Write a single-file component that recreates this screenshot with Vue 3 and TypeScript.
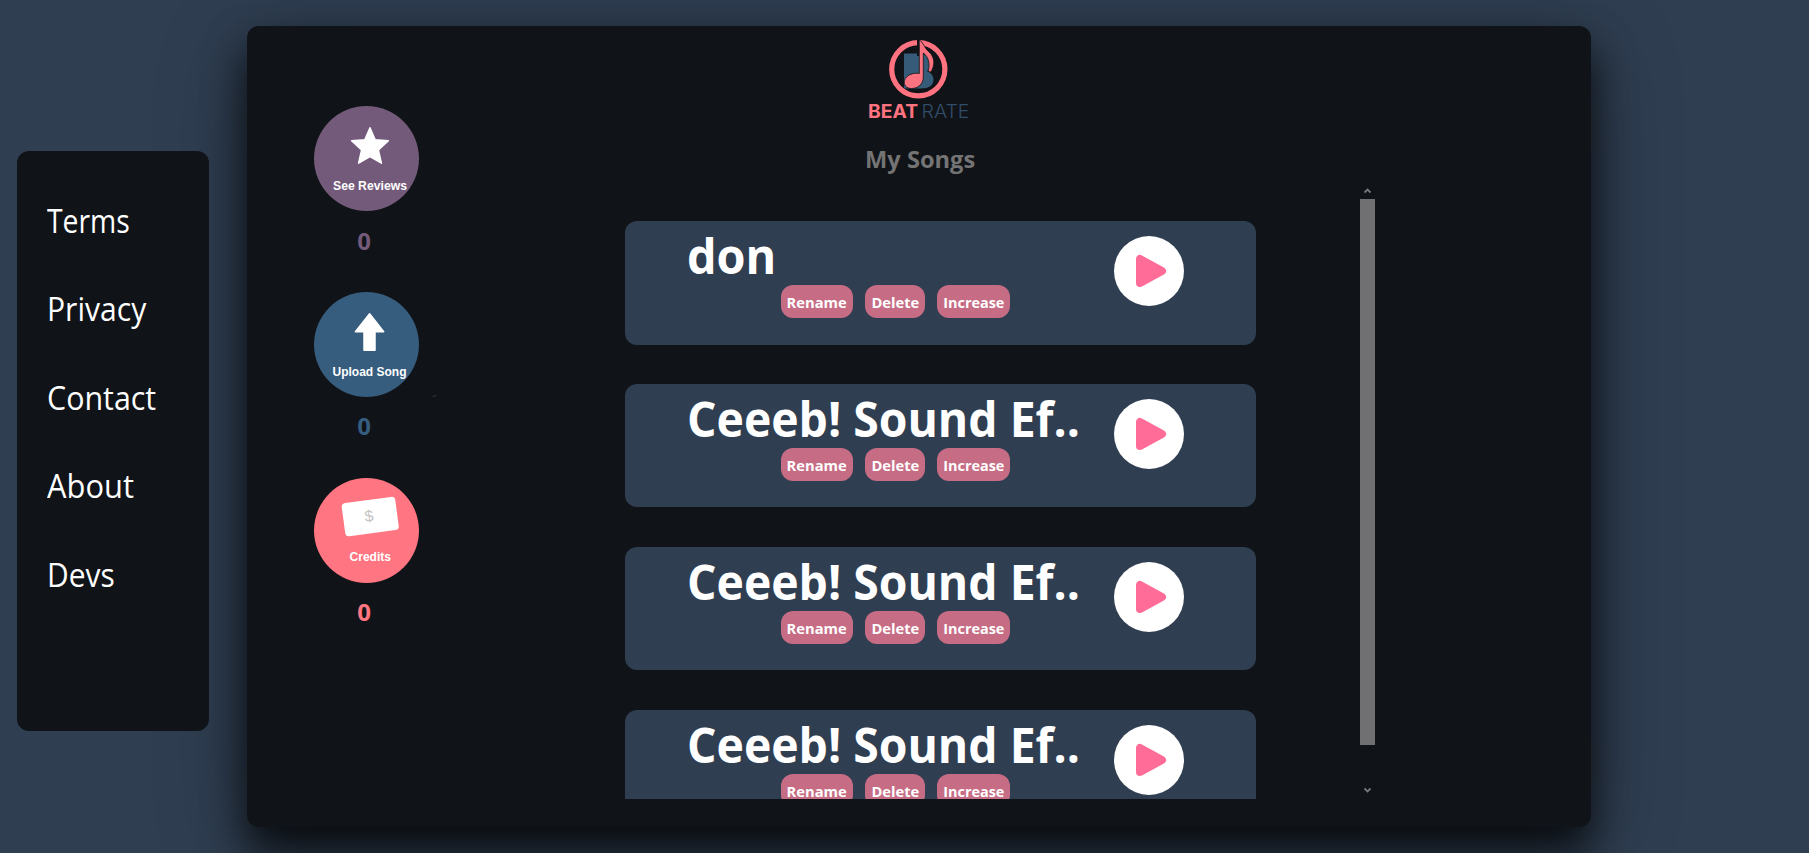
<script setup lang="ts">
interface Stat {
  kind: 'reviews' | 'upload' | 'credits'
  label: string
  count: number
  x: number
  y: number
  width: number
}

const links: string[] = ['Terms', 'Privacy', 'Contact', 'About', 'Devs']

const stats: Stat[] = [
  { kind: 'reviews', label: 'See Reviews', count: 0, x: 19, y: 84, width: 74 },
  { kind: 'upload', label: 'Upload Song', count: 0, x: 18.5, y: 84, width: 74 },
  { kind: 'credits', label: 'Credits', count: 0, x: 35.5, y: 83, width: 41.5 },
]

const songs: string[] = ['don', 'Ceeeb! Sound Ef..', 'Ceeeb! Sound Ef..', 'Ceeeb! Sound Ef..']
</script>

<template>
  <div class="page">
    <nav class="side">
      <a v-for="link in links" :key="link" :class="['link', link.toLowerCase()]"><span>{{ link }}</span></a>
    </nav>

    <main class="panel">
      <aside class="stats">
        <div v-for="s in stats" :key="s.kind" :class="['stat', s.kind]">
          <svg class="disc" width="105" height="105" viewBox="0 0 105 105">
            <circle class="fill" cx="52.5" cy="52.5" r="52.5" />
            <path v-if="s.kind === 'reviews'" class="glyph" d="M56 21.8 61.2 33.8 74.4 34.8 64.4 43.9 67.4 57.2 56 50.7 44.6 57.2 47.6 43.9 37.6 34.8 50.8 33.8Z" />
            <template v-if="s.kind === 'upload'">
              <path class="glyph" d="M55.6 21.8 69.7 39.7H61V58.2H50V39.7H41.4Z" />
              <path d="M118.500 104.300Q121 104.500 122.500 103.300" fill="none" stroke="#33383c" />
            </template>
            <g v-if="s.kind === 'credits'" transform="rotate(-7.6 56.2 38.3)">
              <rect x="29.2" y="21.8" width="54" height="33.500" rx="4" fill="#fff" />
              <text class="dollar" x="55" y="43.2" text-anchor="middle">$</text>
            </g>
            <text class="caption" :x="s.x" :y="s.y" :textLength="s.width" lengthAdjust="spacingAndGlyphs">{{ s.label }}</text>
          </svg>
          <div class="count">{{ s.count }}</div>
        </div>
      </aside>

      <section class="content">
        <svg class="logo" width="104" height="92" viewBox="0 0 104 92">
          <path fill="#355b78" d="M37 17.500H50C59 17.500 63.500 21.500 63.500 27.500C63.500 31 62 33.500 60 35C64 36.500 66.500 40 66.500 43.500C66.500 49.500 62 52.500 54 52.500H37Z" />
          <circle cx="51.300" cy="33.300" r="26.600" fill="none" stroke="#ff7380" stroke-width="5.200" />
          <path fill="#101317" d="M50 2H52.300V20H50Z" />
          <path fill="#ff7380" stroke="#101317" stroke-width=".8" d="M52.300 4C56.500 6 57 12 61.500 15.500C67.500 20.500 68.500 28 64 36L61 35.500C63.500 28.500 61.500 20.500 56.300 17V41C56.300 48 51 52.500 44.500 52.500C39 52.500 36.300 48.500 37.500 44.500C39 39.500 45.500 36.300 52.300 37.500Z" />
          <text class="brand bold" x="1" y="82" textLength="50" lengthAdjust="spacingAndGlyphs">BEAT</text>
          <text class="brand thin" x="54.500" y="82" textLength="48" lengthAdjust="spacingAndGlyphs">RATE</text>
        </svg>
        <h2 class="heading"><span>My Songs</span></h2>

        <div class="scroller">
          <div class="list">
            <article v-for="(song, i) in songs" :key="i" class="card">
              <div class="info">
                <h1 :class="['name', { short: song.length < 5 }]"><span>{{ song }}</span></h1>
                <div class="actions">
                  <button class="rename"><span>Rename</span></button>
                  <button class="delete"><span>Delete</span></button>
                  <button class="increase"><span>Increase</span></button>
                </div>
              </div>
              <svg class="play" width="70" height="70" viewBox="0 0 70 70">
                <circle cx="35" cy="35" r="35" fill="#fff" />
                <path d="M26 23V47L48 35Z" fill="#ff6c97" stroke="#ff6c97" stroke-width="8" stroke-linejoin="round" />
              </svg>
            </article>
          </div>
          <div class="bar">
            <svg width="15" height="15" viewBox="0 0 15 15"><path d="M4.500 8.500 7.500 5.500 10.500 8.500" /></svg>
            <div class="thumb"></div>
            <svg class="down" width="15" height="15" viewBox="0 0 15 15"><path d="M4.500 4.500 7.500 7.500 10.500 4.500" /></svg>
          </div>
        </div>
      </section>
    </main>
  </div>
</template>

<style>
body {
  background: #2f3e51;
  overflow: hidden;
}
</style>

<style scoped>
.page {
  display: flex;
  align-items: flex-start;
  width: 1809px;
  height: 853px;
  overflow: hidden;
  background: #2f3e51;
  font-family: "Open Sans", "Noto Sans", sans-serif;
}
.side {
  position: relative;
  z-index: 1;
  box-sizing: border-box;
  width: 192px;
  height: 580px;
  margin: 151px 38px 0 17px;
  padding: 25.500px 0 0 30px;
  border-radius: 12px;
  background: #101317;
}
.link {
  display: flex;
  align-items: center;
  height: 88.500px;
  color: #fff;
  font-size: 32px;
  line-height: 44px;
}
.link span,
.name span,
.heading span {
  display: inline-block;
  transform-origin: 0 50%;
}
.terms span { transform: scaleX(0.885); }
.privacy span { transform: scaleX(0.94); }
.contact span { transform: scaleX(0.95); }
.about span { transform: scaleX(0.965); }
.devs span { transform: scaleX(0.935); }
.panel {
  display: flex;
  box-sizing: border-box;
  width: 1344px;
  height: 801px;
  margin-top: 26px;
  padding-left: 67px;
  border-radius: 12px;
  background: #101317;
  box-shadow: 0 24px 40px rgba(0, 0, 0, 0.75), 0 20px 90px rgba(0, 0, 0, 0.3);
}
.stats {
  width: 105px;
  padding-top: 80px;
}
.stat {
  height: 186px;
}
.disc {
  display: block;
  overflow: visible;
}
.reviews { color: #745a7a; }
.upload { color: #365c7e; }
.credits { color: #ff7581; }
.fill { fill: currentColor; }
.glyph {
  fill: #fff;
  stroke: #fff;
  stroke-width: 1.500;
  stroke-linejoin: round;
}
.caption {
  fill: #fff;
  font: bold 12.500px "Liberation Sans", sans-serif;
}
.dollar {
  fill: #c4c4c4;
  font: 16px "Liberation Sans", sans-serif;
}
.count {
  width: 100px;
  padding-top: 13px;
  text-align: center;
  font-size: 24px;
  font-weight: 700;
  line-height: 34px;
}
.upload .count,
.credits .count {
  padding-top: 12px;
}
.content {
  width: 1100px;
  padding-top: 10px;
}
.logo {
  display: block;
  margin-left: 448px;
  overflow: visible;
}
.brand {
  font-family: Inter, sans-serif;
  font-size: 18.500px;
}
.bold {
  fill: #ff7380;
  font-weight: 700;
}
.thin {
  fill: #304e69;
  font-weight: 300;
}
.heading {
  height: 42px;
  margin: 14px 0 0 446px;
  color: #747474;
  font-size: 24px;
  line-height: 34px;
}
.heading span {
  transform: scaleX(0.985);
}
.scroller {
  display: flex;
  justify-content: space-between;
  width: 750px;
  height: 615px;
  margin-left: 206px;
  overflow: hidden;
}
.list {
  display: flex;
  flex-direction: column;
  gap: 39.600px;
  width: 631px;
  padding-top: 37.400px;
}
.card {
  display: flex;
  flex: none;
  justify-content: space-between;
  box-sizing: border-box;
  height: 123.200px;
  padding: 0 72px 0 62px;
  border-radius: 12px;
  background: #2f3e51;
}
.info {
  width: 410px;
}
.name {
  height: 64px;
  margin: 0;
  color: #fff;
  font-size: 48px;
  line-height: 70px;
  white-space: nowrap;
}
.name span { transform: scaleX(0.965); }
.short span { transform: scaleX(0.975); }
.actions {
  display: flex;
  gap: 12px;
  margin-left: 94px;
}
button {
  display: flex;
  justify-content: center;
  height: 33px;
  padding: 1px 0 0;
  border: 0;
  border-radius: 12px;
  background: #c66d85;
  color: #fff;
  font: bold 15px/33px "Open Sans", "Noto Sans", sans-serif;
}
button span {
  display: block;
  transform: scaleX(0.98);
}
.rename { width: 72px; }
.delete { width: 60px; }
.increase { width: 73px; }
.increase span { transform: scaleX(0.96); }
.play {
  margin-top: 15px;
}
.bar {
  width: 15px;
}
.bar svg {
  display: block;
  fill: none;
  stroke: #77777a;
  stroke-width: 1.800;
}
.thumb {
  height: 546px;
  background: #707073;
}
.bar .down {
  margin-top: 39px;
}
</style>
